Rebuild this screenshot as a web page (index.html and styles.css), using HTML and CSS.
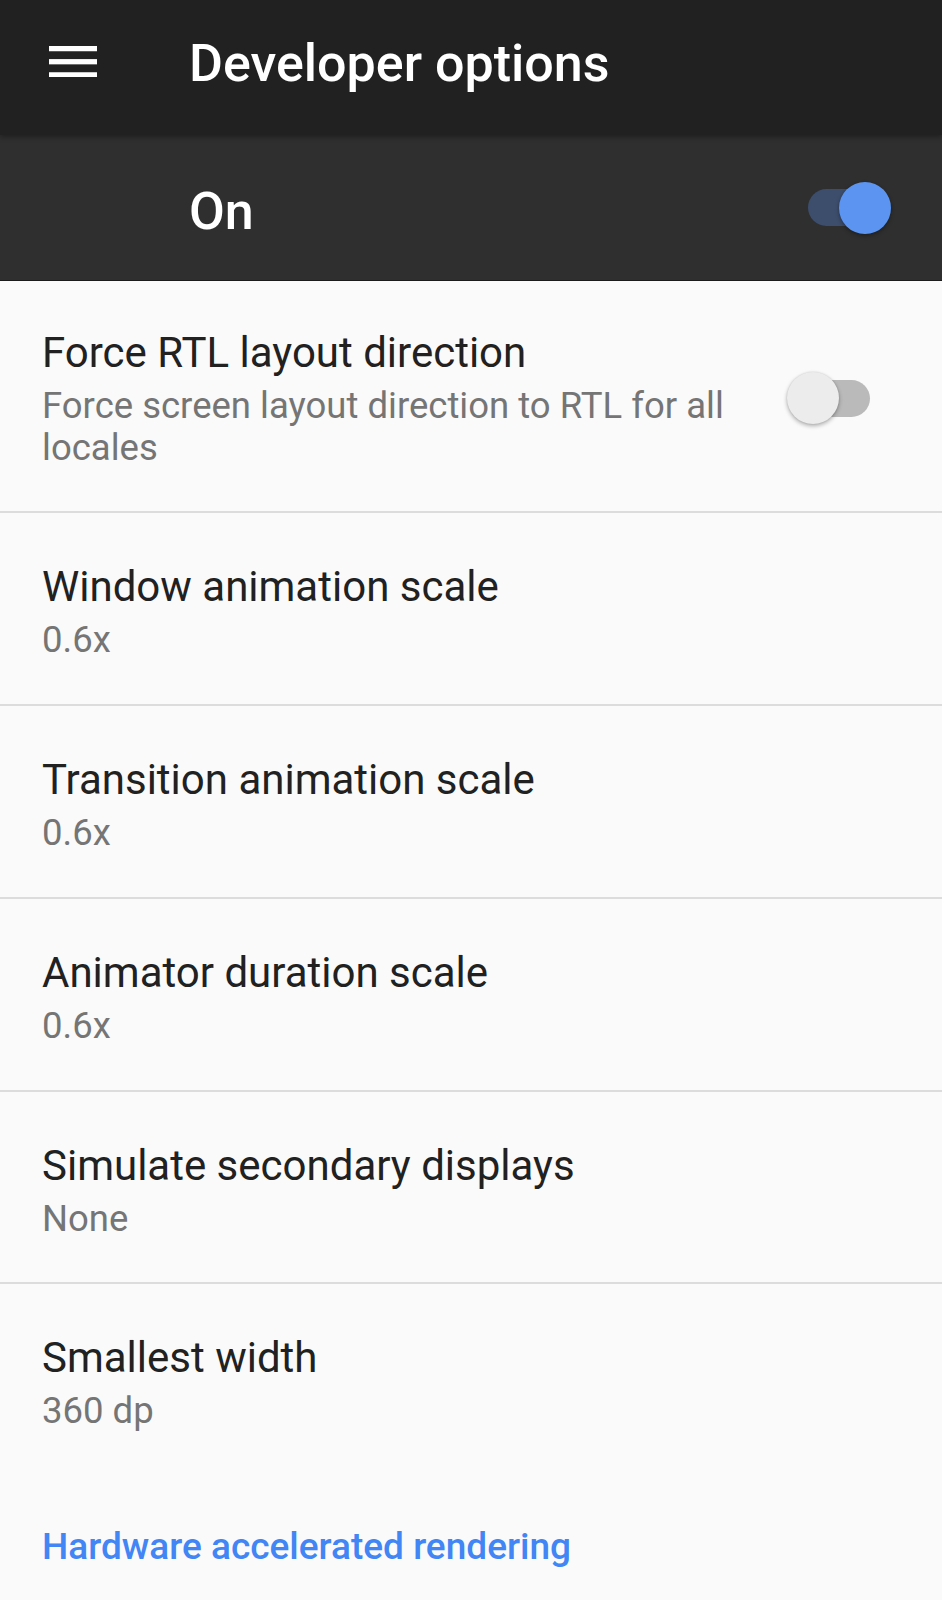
FILE: index.html
```html
<!DOCTYPE html>
<html lang="en">
<head>
<meta charset="utf-8">
<title>Developer options</title>
<link rel="stylesheet" href="styles.css">
</head>
<body>
<div class="screen">
  <header class="toolbar">
    <button class="nav-btn" aria-label="Menu">
      <svg class="hamburger" viewBox="0 0 48 31.5" width="48" height="31.5" aria-hidden="true">
        <rect x="0" y="0" width="48" height="5.25" fill="#fff"/>
        <rect x="0" y="13.1" width="48" height="5.25" fill="#fff"/>
        <rect x="0" y="26.25" width="48" height="5.25" fill="#fff"/>
      </svg>
    </button>
    <h1 class="toolbar-title">Developer options</h1>
  </header>

  <div class="switch-bar">
    <span class="switch-bar-label">On</span>
    <span class="switch on" role="switch" aria-checked="true">
      <span class="track"></span>
      <span class="thumb"></span>
    </span>
  </div>

  <main class="prefs">
    <div class="pref pref-switch">
      <div class="pref-text">
        <div class="pref-title">Force RTL layout direction</div>
        <div class="pref-summary">Force screen layout direction to RTL for all locales</div>
      </div>
      <span class="switch off" role="switch" aria-checked="false">
        <span class="track"></span>
        <span class="thumb"></span>
      </span>
    </div>
    <div class="divider"></div>

    <div class="pref">
      <div class="pref-text">
        <div class="pref-title">Window animation scale</div>
        <div class="pref-summary">0.6x</div>
      </div>
    </div>
    <div class="divider"></div>

    <div class="pref">
      <div class="pref-text">
        <div class="pref-title">Transition animation scale</div>
        <div class="pref-summary">0.6x</div>
      </div>
    </div>
    <div class="divider"></div>

    <div class="pref">
      <div class="pref-text">
        <div class="pref-title">Animator duration scale</div>
        <div class="pref-summary">0.6x</div>
      </div>
    </div>
    <div class="divider"></div>

    <div class="pref">
      <div class="pref-text">
        <div class="pref-title">Simulate secondary displays</div>
        <div class="pref-summary">None</div>
      </div>
    </div>
    <div class="divider"></div>

    <div class="pref">
      <div class="pref-text">
        <div class="pref-title">Smallest width</div>
        <div class="pref-summary">360 dp</div>
      </div>
    </div>

    <div class="category">Hardware accelerated rendering</div>
  </main>
</div>
</body>
</html>
```
FILE: styles.css
```css
* {
  box-sizing: border-box;
}

html, body {
  margin: 0;
  padding: 0;
  background: #fafafa;
}

body {
  font-family: Roboto, "Liberation Sans", sans-serif;
  -webkit-font-smoothing: antialiased;
}

.screen {
  width: 942px;
  min-height: 1600px;
  background: #fafafa;
  overflow: hidden;
}

/* ---------- Toolbar ---------- */
.toolbar {
  position: relative;
  z-index: 2;
  height: 135px;
  padding: 0 0 12px 49px;
  display: flex;
  align-items: center;
  background: #212121;
  box-shadow: 0 2px 5px rgba(0, 0, 0, 0.35);
}

.nav-btn {
  display: flex;
  align-items: center;
  padding: 0;
  margin: 0;
  border: 0;
  background: none;
  width: 48px;
  height: 32px;
}

.hamburger {
  display: block;
}

.toolbar-title {
  margin: 0 0 0 92px;
  padding-top: 3px;
  font-size: 52px;
  font-weight: 500;
  line-height: 61px;
  color: #ffffff;
  white-space: nowrap;
}

/* ---------- Master switch bar ---------- */
.switch-bar {
  position: relative;
  z-index: 1;
  height: 146px;
  padding: 0 51px 0 189px;
  display: flex;
  align-items: center;
  justify-content: space-between;
  background: #2f2f2f;
  border-bottom: 1px solid #1b1b1b;
}

.switch-bar-label {
  padding-top: 7px;
  font-size: 52px;
  font-weight: 500;
  line-height: 61px;
  color: #ffffff;
}

/* ---------- Switch widget ---------- */
.switch {
  position: relative;
  flex: none;
  display: block;
  width: 91px;
  height: 52px;
}

.switch .track {
  position: absolute;
  left: 8px;
  top: 7.5px;
  width: 75px;
  height: 37px;
  border-radius: 18.5px;
}

.switch .thumb {
  position: absolute;
  top: 0;
  width: 52px;
  height: 52px;
  border-radius: 50%;
  box-shadow: 0 2px 4px rgba(0, 0, 0, 0.3), 0 0 2px rgba(0, 0, 0, 0.12);
}

.switch.on .track {
  background: #3d4e6c;
}

.switch.on .thumb {
  left: 39px;
  background: #5b95f1;
}

.switch.off .track {
  background: #bababa;
}

.switch.off .thumb {
  left: 0;
  background: #ececec;
}

/* ---------- Preference list ---------- */
.prefs {
  display: flex;
  flex-direction: column;
}

.pref {
  display: flex;
  align-items: center;
  padding: 49px 0 43.25px 42px;
}

.pref-switch {
  padding-top: 47px;
  padding-right: 64px;
}

.pref-text {
  flex: 1;
  min-width: 0;
}

.pref-switch .pref-text {
  padding-right: 40px;
}

.pref-title {
  font-size: 42px;
  font-weight: 400;
  line-height: 49px;
  color: #212121;
  white-space: nowrap;
}

.pref-summary {
  margin-top: 8px;
  font-size: 36.5px;
  font-weight: 400;
  line-height: 41.5px;
  color: #757575;
}

.divider {
  height: 2px;
  background: #dcdcdc;
}

.category {
  padding: 50px 0 0 42px;
  font-size: 37px;
  font-weight: 500;
  line-height: 43px;
  color: #4285f4;
  white-space: nowrap;
}
```
